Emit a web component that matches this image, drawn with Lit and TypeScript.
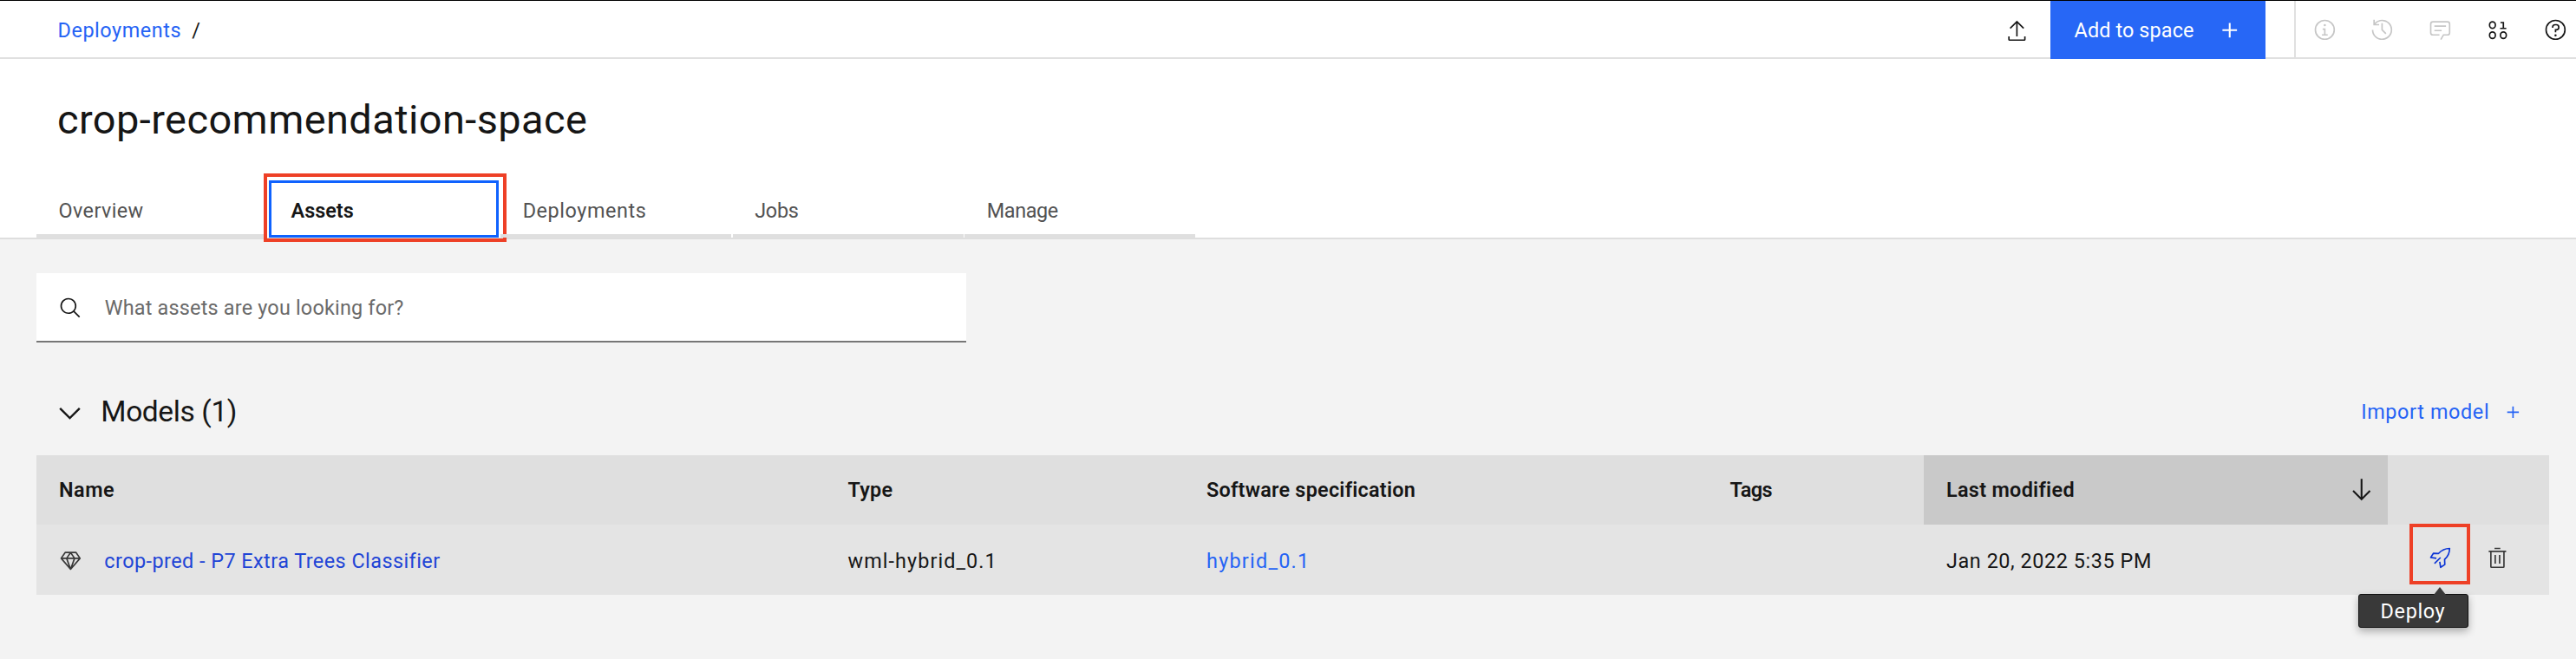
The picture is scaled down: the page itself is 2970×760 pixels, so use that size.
import { LitElement, html, css, svg } from "lit";
import { customElement, property, state } from "lit/decorators.js";
import { classMap } from "lit/directives/class-map.js";

const icons = {
  upload: svg`<path d="M26 24v4H6v-4H4v4a2 2 0 0 0 2 2h20a2 2 0 0 0 2-2v-4zM6 12l1.41 1.41L15 5.83V24h2V5.83l7.59 7.58L26 12 16 2z"/>`,
  add: svg`<path d="M17 15V8h-2v7H8v2h7v7h2v-7h7v-2z"/>`,
  info: svg`<path d="M17 22v-8h-4v2h2v6h-3v2h8v-2zM16 8a1.5 1.5 0 1 0 1.5 1.5A1.5 1.5 0 0 0 16 8z"/><path d="M16 30a14 14 0 1 1 14-14 14 14 0 0 1-14 14zm0-26a12 12 0 1 0 12 12A12 12 0 0 0 16 4z"/>`,
  history: svg`<path d="M20.59 22 15 16.41V7h2v8.58l5 5.01z"/><path d="M16 2A13.94 13.94 0 0 0 6 6.23V2H4v8h8V8H7.08A12 12 0 1 1 4 16H2A14 14 0 1 0 16 2z"/>`,
  chat: svg`<path d="M17.74 30 16 29l4-7h6a2 2 0 0 0 2-2V8a2 2 0 0 0-2-2H6a2 2 0 0 0-2 2v12a2 2 0 0 0 2 2h9v2H6a4 4 0 0 1-4-4V8a4 4 0 0 1 4-4h20a4 4 0 0 1 4 4v12a4 4 0 0 1-4 4h-4.84z"/><path d="M8 10h16v2H8zM8 16h10v2H8z"/>`,
  binary: svg`<g fill="none" stroke="currentColor" stroke-width="2"><rect x="4" y="5" width="8" height="9" rx="4"/><path d="M19 6h4v8M18.500 14H27"/><rect x="4" y="19" width="8" height="9" rx="4"/><rect x="19" y="19" width="8" height="9" rx="4"/></g>`,
  help: svg`<path d="M16 2a14 14 0 1 0 14 14A14 14 0 0 0 16 2zm0 26a12 12 0 1 1 12-12 12 12 0 0 1-12 12z"/><circle cx="16" cy="23.500" r="1.500"/><path d="M17 8h-1.5a4.49 4.49 0 0 0-4.5 4.5v.5h2v-.5a2.5 2.5 0 0 1 2.500-2.500H17a2.500 2.500 0 0 1 0 5h-2v4.500h2V17a4.500 4.500 0 0 0 0-9z"/>`,
  search: svg`<path d="m29 27.586-7.552-7.552a11.018 11.018 0 1 0-1.414 1.414L27.586 29zM4 13a9 9 0 1 1 9 9 9.01 9.01 0 0 1-9-9z"/>`,
  chevron: svg`<path d="M16 22 6 12l1.400-1.400 8.600 8.600 8.600-8.600L26 12z"/>`,
  arrowDown: svg`<path d="M24.590 16.590 17 24.170V4h-2v20.170l-7.590-7.580L6 18l10 10 10-10z"/>`,
  gem: svg`<g fill="none" stroke="currentColor" stroke-width="2" stroke-linejoin="round"><path d="M8.500 5h15L29 13 16 28 3 13zM3 13h26M16 5l-5.500 8L16 28l5.500-15z"/></g>`,
  rocket: svg`<g fill="none" stroke="currentColor" stroke-width="2" stroke-linejoin="round"><path d="M10.800 16.600 3 15.400 6.800 9.600l7 .3C18 5.200 22.500 3 29 3c0 6.500-2.200 11-6.900 15.200l.3 7L16.600 29l-1.200-7.800M16.500 15.500 8.200 23.800"/></g>`,
  trash: svg`<path d="M12 12h2v12h-2zM18 12h2v12h-2zM4 6v2h2v20a2 2 0 0 0 2 2h16a2 2 0 0 0 2-2V8h2V6zm4 22V8h16v20zM12 2h8v2h-8z"/>`,
};
type IconName = keyof typeof icons;

@customElement("ui-icon")
class UiIcon extends LitElement {
  static styles = css`
    :host { display: inline-flex; width: 26.8px; height: 26.8px; flex: none; }
    svg { width: 100%; height: 100%; fill: currentColor; display: block; }
  `;
  @property() name: IconName = "add";
  render() {
    return html`<svg viewBox="0 0 32 32" aria-hidden="true">${icons[this.name]}</svg>`;
  }
}

@customElement("app-root")
class AppRoot extends LitElement {
  @state() private active = "Assets";

  static styles = css`
    :host {
      display: flex; flex-direction: column; height: 760px; box-sizing: border-box;
      background: #f3f3f3; color: #161616; overflow: hidden;
      font-family: Roboto, "Liberation Sans", sans-serif; font-size: 23.4px; line-height: 30px;
    }
    *, *::before, *::after { box-sizing: border-box; }
    a { color: #2563f5; text-decoration: none; }
    button { font: inherit; border: 0; background: none; padding: 0; margin: 0; color: inherit; text-align: left; }

    .topbar { display: flex; height: 68px; flex: none; background: #fff; border-top: 1px solid #000; border-bottom: 2px solid #e0e0e0; }
    .crumbs { display: flex; align-items: center; gap: 12px; padding: 3px 0 0 66.5px; flex: 1; }
    .crumb { letter-spacing: .57px; }
    .upload { display: flex; align-items: center; margin-right: 25px; padding-top: 4px; }
    .primary { display: flex; align-items: center; width: 247.500px; height: 67px; background: #2767f6; color: #fff; padding: 0 24px 0 27.500px; justify-content: space-between; letter-spacing: .12px; }
    .plus-lg { width: 33.500px; height: 33.500px; }
    .tools { display: flex; align-items: center; gap: 39.900px; margin-left: 33.500px; width: 325px; border-left: 2px solid #e0e0e0; padding: 2px 0 0 19.500px; }
    .muted { color: #c6c6c6; }

    .hero { background: #fff; height: 208px; flex: none; border-bottom: 2px solid #dedede; display: flex; flex-direction: column; justify-content: space-between; }
    h1 { margin: 0; padding: 40px 0 0 66px; font-size: 46.900px; line-height: 60px; font-weight: 400; letter-spacing: .44px; }
    .tabs { display: flex; gap: 1.700px; padding-left: 42px; height: 66px; }
    .tab { position: relative; width: 265.900px; height: 66px; padding: 7px 0 0 25.500px; border-bottom: 4px solid #dfdfdf; color: #525252; }
    .tab.active { border: 3px solid #0f62fe; padding: 3px 0 0 23px; color: #161616; font-weight: 600; }
    .tab.active::after { content: ""; position: absolute; inset: -11px -12px -8px -9px; border: 4.500px solid #ee4026; }
    .t-overview { letter-spacing: .4px; }
    .t-deployments { letter-spacing: .57px; }
    .t-jobs { letter-spacing: -.29px; }
    .t-manage { letter-spacing: -.38px; }

    .content { display: flex; flex-direction: column; padding: 39px 31px 0 41.500px; }
    .search { display: flex; align-items: center; gap: 26.500px; width: 1072px; height: 80px; padding: 2px 0 0 26px; background: #fff; border-bottom: 2px solid #767676; color: #6a6a6a; letter-spacing: .2px; }
    .search ui-icon { color: #161616; }
    .section { display: flex; align-items: center; height: 130px; padding: 30px 28px 0 19px; }
    .section ui-icon.chev { width: 39px; height: 39px; margin-top: 2px; }
    h2 { margin: 0 auto 0 16.800px; font-size: 33.500px; line-height: 40px; font-weight: 400; letter-spacing: -.39px; }
    .import { display: flex; align-items: center; gap: 14px; letter-spacing: .63px; }

    .row { display: grid; grid-template-columns: 909.500px 413.500px 603.500px 249.500px 535.500px 1fr; }
    .cell { display: flex; align-items: center; padding-left: 26.500px; min-width: 0; white-space: nowrap; }
    .head { height: 79.500px; background: #dfdfdf; font-weight: 600; }
    .head .cell { padding-top: 1px; }
    .head .sorted { background: #c9c9c9; justify-content: space-between; padding-right: 14px; }
    .arrow { width: 33.500px; height: 33.500px; margin-bottom: 2px; }
    .body { height: 81.500px; background: #e4e4e4; }
    .body .cell { padding-top: 3px; }
    .name { gap: 25.500px; }
    .name ui-icon { color: #393939; margin-top: -1px; }
    .name a { color: #1f45d6; letter-spacing: .46px; }
    .h-name { letter-spacing: .52px; }
    .h-type { letter-spacing: .24px; }
    .h-spec { letter-spacing: .25px; }
    .h-tags { letter-spacing: -.54px; }
    .h-mod { letter-spacing: .31px; }
    .b-type { letter-spacing: 1.080px; }
    .b-spec { letter-spacing: 1.250px; }
    .b-mod { letter-spacing: .57px; }
    .body .actions { padding: 0 0 4px 46.600px; gap: 39.900px; }
    .deploy { position: relative; display: flex; color: #0a34d6; }
    .deploy::before { content: ""; position: absolute; left: -21.600px; top: -26px; width: 70px; height: 70px; border: 4px solid #ee4026; }
    .trash { color: #393939; }
    .tip { position: absolute; top: 54.800px; left: -81px; width: 127.500px; height: 39.500px; background: #393939; color: #fff; border-radius: 3px; border: 1px solid #111; padding: 4px 0 0 25px; line-height: 30px; letter-spacing: .65px; box-shadow: 0 4px 10px rgba(0,0,0,.3); }
    .tip::before { content: ""; position: absolute; left: 86px; top: -9px; border: 7.500px solid transparent; border-top: 0; border-bottom: 9px solid #393939; }
  `;

  private tabs = ["Overview", "Assets", "Deployments", "Jobs", "Manage"];

  render() {
    return html`
      <header class="topbar">
        <nav class="crumbs"><a class="crumb">Deployments</a><span>/</span></nav>
        <div class="upload"><ui-icon name="upload"></ui-icon></div>
        <button class="primary">Add to space<ui-icon class="plus-lg" name="add"></ui-icon></button>
        <div class="tools">
          <ui-icon class="muted" name="info"></ui-icon>
          <ui-icon class="muted" name="history"></ui-icon>
          <ui-icon class="muted" name="chat"></ui-icon>
          <ui-icon name="binary"></ui-icon>
          <ui-icon name="help"></ui-icon>
        </div>
      </header>
      <section class="hero">
        <h1>crop-recommendation-space</h1>
        <nav class="tabs">
          ${this.tabs.map((t) => html`<button @click=${() => (this.active = t)}
            class=${classMap({ tab: true, active: t === this.active, ["t-" + t.toLowerCase()]: true })}>${t}</button>`)}
        </nav>
      </section>
      <main class="content">
        <div class="search"><ui-icon name="search"></ui-icon><span>What assets are you looking for?</span></div>
        <div class="section">
          <ui-icon class="chev" name="chevron"></ui-icon>
          <h2>Models (1)</h2>
          <a class="import">Import model<ui-icon name="add"></ui-icon></a>
        </div>
        <div class="row head">
          <div class="cell h-name">Name</div>
          <div class="cell h-type">Type</div>
          <div class="cell h-spec">Software specification</div>
          <div class="cell h-tags">Tags</div>
          <div class="cell sorted h-mod">Last modified<ui-icon class="arrow" name="arrowDown"></ui-icon></div>
          <div class="cell"></div>
        </div>
        <div class="row body">
          <div class="cell name"><ui-icon name="gem"></ui-icon><a>crop-pred - P7 Extra Trees Classifier</a></div>
          <div class="cell b-type">wml-hybrid_0.1</div>
          <div class="cell b-spec"><a>hybrid_0.1</a></div>
          <div class="cell"></div>
          <div class="cell b-mod">Jan 20, 2022 5:35 PM</div>
          <div class="cell actions">
            <div class="deploy"><ui-icon name="rocket"></ui-icon><div class="tip">Deploy</div></div>
            <ui-icon class="trash" name="trash"></ui-icon>
          </div>
        </div>
      </main>
    `;
  }
}
